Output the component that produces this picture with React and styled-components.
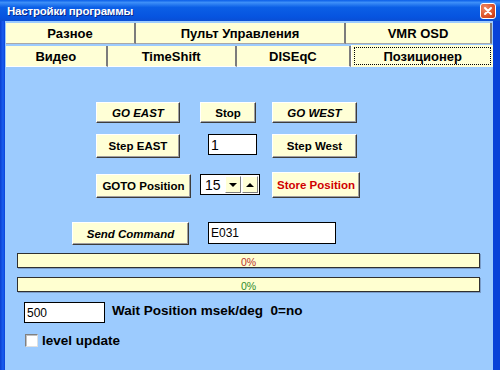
import React from 'react';
import styled, { createGlobalStyle } from 'styled-components';

const GlobalStyle = createGlobalStyle`
  html, body {
    margin: 0;
    padding: 0;
    background: #0842d8;
  }
  * { box-sizing: border-box; }
`;

const Window = styled.div`
  width: 500px;
  height: 370px;
  display: flex;
  flex-direction: column;
  background: linear-gradient(to right, #0a3fd0, #1a5ef0 3px, #0842d8 5px);
  font-family: 'Liberation Sans', Arial, sans-serif;
  overflow: hidden;
`;

const TitleBar = styled.div`
  height: 21px;
  flex: none;
  display: flex;
  align-items: center;
  justify-content: space-between;
  padding: 0 4px 0 7px;
  background: linear-gradient(to bottom, #0a5ee8 0%, #3d8ff8 12%, #0b5fe6 35%, #0654e0 80%, #0a4ed4 100%);
`;

const Title = styled.span`
  color: #fff;
  font-weight: bold;
  font-size: 11.5px;
  text-shadow: 1px 1px 0 #0a2a8a;
  letter-spacing: -0.2px;
`;

const CloseBtn = styled.div`
  width: 16px;
  height: 16px;
  border: 1px solid #fff;
  border-radius: 3px;
  background: radial-gradient(circle at 30% 30%, #f08a64, #d84a20 70%, #b83010);
  display: flex;
  align-items: center;
  justify-content: center;
  margin-top: 1px;
`;

const Body = styled.div`
  flex: 1;
  margin: 0 7px 0 5px;
  background: #9ccbfe;
  display: flex;
  flex-direction: column;
  padding-top: 2px;
`;

const TabRow = styled.div`
  display: flex;
  height: ${p => p.$h}px;
  padding-left: 1px;
  align-items: flex-end;
`;

const Tab = styled.div`
  width: ${p => p.$w}px;
  height: ${p => (p.$active ? 22 : 21)}px;
  background: #ffffd6;
  display: flex;
  align-items: center;
  justify-content: center;
  font-weight: bold;
  font-size: 13px;
  color: #000;
  border-right: ${p => (p.$active ? 'none' : '2px solid #7c7c7c')};
  border-bottom: 1px solid ${p => (p.$bottom || '#a8a8a8')};
  border-left: ${p => (p.$active ? '1px solid #fff' : 'none')};
  ${p => p.$active && 'border-bottom: none;'}
`;

const Focus = styled.div`
  width: calc(100% - 4px);
  height: 18px;
  border: 1px dotted #000;
  display: flex;
  align-items: center;
  justify-content: center;
`;

const Row = styled.div`
  display: flex;
  align-items: flex-start;
  margin-top: ${p => p.$mt}px;
  padding-left: ${p => p.$pl}px;
`;

const Button = styled.div`
  width: ${p => p.$w}px;
  height: ${p => p.$h}px;
  margin-left: ${p => p.$ml || 0}px;
  margin-top: ${p => p.$top || 0}px;
  background: #ffffd6;
  border: 1px solid;
  border-color: #fff #3c3c3c #3c3c3c #fff;
  box-shadow: inset -1px -1px 0 #a0a0a0;
  display: flex;
  align-items: center;
  justify-content: center;
  font-size: 11.5px;
  font-weight: bold;
  font-style: ${p => (p.$italic ? 'italic' : 'normal')};
  color: ${p => p.$color || '#000'};
  flex: none;
`;

const Field = styled.div`
  width: ${p => p.$w}px;
  height: ${p => p.$h || 21}px;
  margin-left: ${p => p.$ml || 0}px;
  margin-top: ${p => p.$top || 0}px;
  background: #fff;
  border: 1px solid #000;
  display: flex;
  align-items: center;
  padding-left: 2px;
  font-size: ${p => p.$fs || 12}px;
  font-weight: ${p => p.$weight || 'normal'};
  color: #000;
  flex: none;
`;

const SpinValue = styled.span`
  flex: 1;
  font-size: 14px;
  padding-left: 2px;
`;

const SpinBtn = styled.div`
  width: 16px;
  height: 17px;
  margin-right: 1px;
  background: #ffffd6;
  border: 1px solid;
  border-color: #fff #808080 #808080 #fff;
  display: flex;
  align-items: center;
  justify-content: center;
`;

const Arrow = styled.div`
  width: 0;
  height: 0;
  border-left: 4px solid transparent;
  border-right: 4px solid transparent;
  ${p => (p.$up ? 'border-bottom: 4px solid #000;' : 'border-top: 4px solid #000;')}
`;

const Progress = styled.div`
  height: 15px;
  margin: ${p => p.$mt}px 0 0 12px;
  width: 463px;
  background: #ffffd0;
  border: 1px solid #303030;
  box-shadow: 1px 1px 0 #7a9cc8;
  display: flex;
  align-items: center;
  justify-content: center;
  font-size: 10.5px;
  padding-top: 2px;
  color: ${p => p.$color};
`;

const Label = styled.span`
  margin-left: ${p => p.$ml}px;
  margin-top: ${p => p.$top || 0}px;
  font-size: 13.5px;
  font-weight: bold;
  color: #000;
  white-space: pre;
`;

const Check = styled.div`
  width: 13px;
  height: 13px;
  background: #fff;
  border: 1px solid;
  border-color: #808080 #e0e0e0 #e0e0e0 #808080;
  box-shadow: inset 1px 1px 0 #c0c0c0;
  flex: none;
`;

const CheckRow = styled.div`
  display: flex;
  align-items: center;
  margin-top: 10px;
  padding-left: 20px;
`;

export default function App() {
  return (
    <>
      <GlobalStyle />
      <Window>
        <TitleBar>
          <Title>Настройки программы</Title>
          <CloseBtn>
            <svg width="10" height="10" viewBox="0 0 10 10">
              <path d="M2 2 L8 8 M8 2 L2 8" stroke="#fff" strokeWidth="2" strokeLinecap="round" />
            </svg>
          </CloseBtn>
        </TitleBar>
        <Body>
          <TabRow $h={21}>
            <Tab $w={130}>Разное</Tab>
            <Tab $w={210}>Пульт Управления</Tab>
            <Tab $w={146}>VMR OSD</Tab>
          </TabRow>
          <TabRow $h={23}>
            <Tab $w={102} $bottom="#fff">Видео</Tab>
            <Tab $w={129} $bottom="#fff">TimeShift</Tab>
            <Tab $w={115} $bottom="#fff">DISEqC</Tab>
            <Tab $w={142} $active>
              <Focus>Позиционер</Focus>
            </Tab>
          </TabRow>

          <Row $mt={35} $pl={91}>
            <Button $w={84} $h={21} $italic>GO EAST</Button>
            <Button $w={56} $h={21} $ml={20}>Stop</Button>
            <Button $w={85} $h={21} $ml={16} $italic>GO WEST</Button>
          </Row>

          <Row $mt={11} $pl={91}>
            <Button $w={84} $h={24}>Step EAST</Button>
            <Field $w={49} $ml={28} $fs={14}>1</Field>
            <Button $w={85} $h={24} $ml={15}>Step West</Button>
          </Row>

          <Row $mt={14} $pl={91}>
            <Button $w={95} $h={24} $top={2}>GOTO Position</Button>
            <Field $w={60} $ml={9} $top={2}>
              <SpinValue>15</SpinValue>
              <SpinBtn><Arrow /></SpinBtn>
              <SpinBtn><Arrow $up /></SpinBtn>
            </Field>
            <Button $w={88} $h={26} $ml={12} $color="#d00000">Store Position</Button>
          </Row>

          <Row $mt={24} $pl={67}>
            <Button $w={117} $h={23} $italic>Send Command</Button>
            <Field $w={128} $h={22} $ml={19} $weight={500}>E031</Field>
          </Row>

          <Progress $mt={8} $color="#b83030">0%</Progress>
          <Progress $mt={9} $color="#2f8a2f">0%</Progress>

          <Row $mt={10} $pl={19}>
            <Field $w={81} $fs={12}>500</Field>
            <Label $ml={7} $top={1}>{'Wait Position msek/deg  0=no'}</Label>
          </Row>

          <CheckRow>
            <Check />
            <Label $ml={4}>level update</Label>
          </CheckRow>
        </Body>
      </Window>
    </>
  );
}
